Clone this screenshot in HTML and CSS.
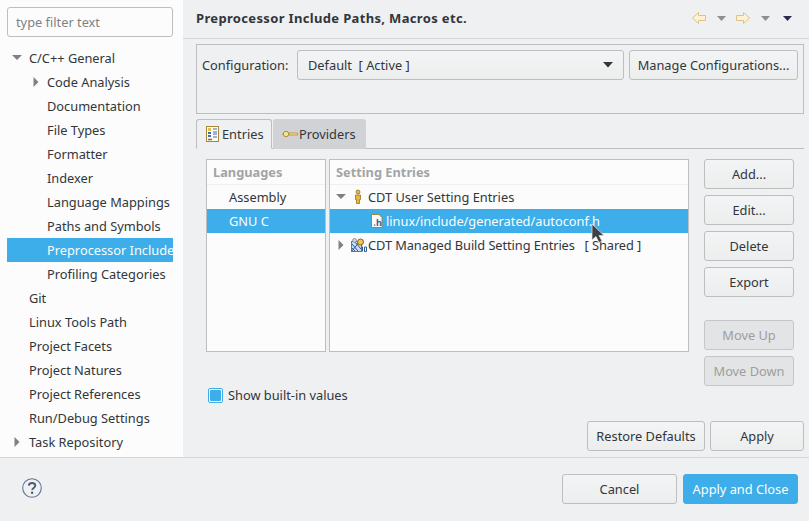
FILE: index.html
```html
<!DOCTYPE html>
<html lang="en">
<head>
<meta charset="utf-8">
<title>Preprocessor Include Paths, Macros etc.</title>
<link rel="stylesheet" href="styles.css">
</head>
<body>
<div class="app">
  <div class="main">
    <aside class="sidebar">
      <div class="filter">type filter text</div>
      <ul class="tree">
        <li class="node lvl0"><svg class="tw" viewBox="0 0 12 12"><path d="M1 3h10L6 8z"/></svg><span>C/C++ General</span></li>
        <li class="node lvl1"><svg class="tw" viewBox="0 0 12 12"><path d="M3.500 1v10L8.500 6z"/></svg><span>Code Analysis</span></li>
        <li class="node lvl1"><span>Documentation</span></li>
        <li class="node lvl1"><span>File Types</span></li>
        <li class="node lvl1"><span>Formatter</span></li>
        <li class="node lvl1"><span>Indexer</span></li>
        <li class="node lvl1"><span>Language Mappings</span></li>
        <li class="node lvl1"><span>Paths and Symbols</span></li>
        <li class="node lvl1 selected"><span class="clip">Preprocessor Include</span></li>
        <li class="node lvl1"><span>Profiling Categories</span></li>
        <li class="node lvl0"><span>Git</span></li>
        <li class="node lvl0"><span>Linux Tools Path</span></li>
        <li class="node lvl0"><span>Project Facets</span></li>
        <li class="node lvl0"><span>Project Natures</span></li>
        <li class="node lvl0"><span>Project References</span></li>
        <li class="node lvl0"><span>Run/Debug Settings</span></li>
        <li class="node lvl0"><svg class="tw" viewBox="0 0 12 12"><path d="M3.500 1v10L8.500 6z"/></svg><span>Task Repository</span></li>
      </ul>
    </aside>
    <section class="page">
      <header class="page-head">
        <h1>Preprocessor Include Paths, Macros etc.</h1>
        <div class="nav">
          <svg class="arrow" viewBox="1 1 14 12"><path d="M1.500 7 7.500 1.500V4.500H14.500V9.500H7.500V12.500z"/></svg>
          <svg class="mini" viewBox="0 0 11 7"><path d="M1 1h9L5.500 6z"/></svg>
          <svg class="arrow fwd" viewBox="1 1 14 12"><path d="M14.500 7 8.500 1.500V4.500H1.500V9.500H8.500V12.500z"/></svg>
          <svg class="mini" viewBox="0 0 11 7"><path d="M1 1h9L5.500 6z"/></svg>
          <svg class="mini menu" viewBox="0 0 11 7"><path d="M1 1h9L5.500 6z"/></svg>
        </div>
      </header>
      <div class="body">
        <div class="config">
          <span class="config-label">Configuration:</span>
          <div class="combo btn"><span>Default&nbsp; [ Active ]</span><svg class="combo-arrow" viewBox="0 0 10 6"><path d="M0 0h10L5 5.500z"/></svg></div>
          <button class="btn manage">Manage Configurations...</button>
        </div>
        <div class="tabs">
          <div class="tab active">
            <svg class="ic16" viewBox="0 0 14 16"><rect x=".5" y=".5" width="12" height="15" fill="#fdfcf4" stroke="#a8843c"/><rect x="2" y="2" width="3" height="3" fill="#e8c04a"/><path d="M2 6h3v2H2zM2 9h3v2H2z" fill="#3a6fb0"/><path d="M7 3h4M7 6h4M7 8h4M7 11h4" stroke="#3a6fb0"/><path d="M2 13.500h4" stroke="#c0562a" stroke-width="1.500"/></svg>
            <span>Entries</span>
          </div>
          <div class="tab">
            <svg class="ic-key" viewBox="0 0 16 8"><circle cx="4" cy="4" r="2.700" fill="#f4e3a0" stroke="#b18f2a"/><path d="M0 4h1M7 3h8.500v2H7z" fill="#f4e3a0" stroke="#b18f2a" stroke-width=".8"/></svg>
            <span>Providers</span>
          </div>
        </div>
        <div class="tab-body">
          <div class="tables">
            <div class="table languages">
              <div class="th">Languages</div>
              <div class="row indent-lang">Assembly</div>
              <div class="row indent-lang selected">GNU C</div>
            </div>
            <div class="table entries">
              <div class="th">Setting Entries</div>
              <div class="row">
                <svg class="tw tw-e" viewBox="0 0 12 12"><path d="M1 3h10L6 8z"/></svg>
                <svg class="ic-e" viewBox="0 0 10 16"><circle cx="5" cy="3" r="2" fill="#e8b93c" stroke="#8a6414" stroke-width=".7"/><path d="M2.500 6h5v4.500H6.500V14.500h-3V10.500h-1z" fill="#e8b93c" stroke="#8a6414" stroke-width=".7"/></svg>
                <span>CDT User Setting Entries</span>
              </div>
              <div class="row selected child">
                <svg class="ic-h" viewBox="0 0 12 14"><path d="M.5.5h7.500l3 3v10H.5z" fill="#fbfaf6" stroke="#a8843c"/><path d="M3 10.500h1.300v1.300H3z" fill="#2f5f9e"/><text x="5" y="11.800" class="h-letter">h</text></svg>
                <span>linux/include/generated/autoconf.h</span>
              </div>
              <div class="row">
                <svg class="tw tw-e collapsed" viewBox="0 0 12 12"><path d="M3.500 1v10L8.500 6z"/></svg>
                <svg class="ic-b" viewBox="0 0 16 14"><rect x=".5" y="3.500" width="10" height="10" fill="#cfdcee" stroke="#5a78a6"/><path d="M1 6l6 7M1 10l3 3M4 4l6 7M8 4l2 3M1 13l4-5 3-4" stroke="#2f5a96" fill="none"/><circle cx="3.500" cy="2.500" r="2" fill="#c9d3df" stroke="#70808f" stroke-width=".7"/><circle cx="9.500" cy="4" r="3" fill="#edc65a" stroke="#8a6414"/><path d="M11.500 8.500v5M13.500 9h2v4.500h-2z" fill="#fcfcfc" stroke="#2f5a96"/></svg>
                <span class="tight">CDT Managed Build Setting Entries&nbsp;&nbsp; [ Shared ]</span>
              </div>
            </div>
            <div class="actions">
              <button class="btn">Add...</button>
              <button class="btn">Edit...</button>
              <button class="btn">Delete</button>
              <button class="btn">Export</button>
              <button class="btn disabled spaced">Move Up</button>
              <button class="btn disabled">Move Down</button>
            </div>
          </div>
          <label class="check"><span class="box"><span class="box-fill"></span></span><span>Show built-in values</span></label>
        </div>
        <div class="page-btns">
          <button class="btn restore">Restore Defaults</button>
          <button class="btn apply">Apply</button>
        </div>
      </div>
    </section>
  </div>
  <footer class="foot">
    <svg class="help" viewBox="0 0 20 20"><circle cx="10" cy="10" r="9.300" fill="none" stroke="#5e7596" stroke-width="1.100"/><path d="M6.800 7.600C6.900 5.800 8.200 5 10 5c1.900 0 3.300 1 3.300 2.600 0 2.300-3.100 2.300-3.100 4.400" fill="none" stroke="#4d5a70" stroke-width="1.900"/><circle cx="10.100" cy="14.700" r="1.200" fill="#4d5a70"/></svg>
    <div class="foot-btns">
      <button class="btn cancel">Cancel</button>
      <button class="btn primary">Apply and Close</button>
    </div>
  </footer>
  <svg class="cursor" viewBox="0 0 14 22"><path d="M1 1v16l4-3.500 3 6 3-1.500-3-5.500h5z" fill="#3d4146" stroke="#e8e8e8" stroke-width=".7"/></svg>
</div>
</body>
</html>
```
FILE: styles.css
```css
* { box-sizing: border-box; }
html, body { margin: 0; padding: 0; }
body {
  width: 809px;
  height: 521px;
  overflow: hidden;
  font-family: "Noto Sans", sans-serif;
  font-size: 12.8px;
  color: #31363b;
  background: #eff0f1;
}
.app { position: relative; width: 809px; height: 521px; display: flex; flex-direction: column; }
.main { display: flex; height: 458px; border-bottom: 1px solid #d6d7d9; }
.sidebar { width: 183px; height: 457px; background: #fcfcfc; padding: 7px 10px 0 7px; overflow: hidden; }
.filter {
  height: 30px; line-height: 28px; padding-left: 8px;
  background: #fcfcfc; border: 1px solid #bcbebf; border-radius: 3px; color: #7f8285;
}
.tree { list-style: none; margin: 9px 0 0; padding: 0; }
.node { position: relative; height: 24px; line-height: 24px; white-space: nowrap; overflow: hidden; }
.lvl0 { padding-left: 22px; }
.lvl1 { padding-left: 40px; }
.node.selected { background: #3daee9; color: #fcfcfc; }
.tw { position: absolute; width: 12px; height: 12px; top: 6px; fill: #7e8184; }
.lvl0 .tw { left: 4px; }
.lvl1 .tw { left: 23px; }
.page { flex: 1; display: flex; flex-direction: column; min-width: 0; }
.page-head {
  height: 39px; border-bottom: 1px solid #d6d7d9; padding: 0 16px 3px 13px;
  display: flex; align-items: center; justify-content: space-between;
}
h1 { margin: 0; font-size: 13px; font-weight: 700; letter-spacing: .34px; color: #31363b; }
.nav { display: flex; align-items: center; }
.arrow { width: 14px; height: 12px; fill: #fdf3d4; stroke: #dfc284; stroke-width: 1; margin-right: 10px; margin-top: 1px; }
.arrow.fwd { margin-left: 9px; }
.mini { width: 11px; height: 7px; fill: #8d8f92; margin-top: 1px; }
.mini.menu { fill: #2d2a50; margin-left: 11px; }
.body { flex: 1; padding: 5px 5px 0 13px; display: flex; flex-direction: column; }
.config {
  height: 70px; border: 1px solid #bcbebf; padding: 5px 5px 0 5px;
  display: flex; align-items: flex-start; gap: 5px;
}
.config-label { line-height: 30px; width: 90px; flex: none; }
.btn {
  font: inherit; color: inherit; height: 30px; padding: 0;
  background: linear-gradient(#f3f4f5, #eceded);
  border: 1px solid #bcbebf; border-radius: 3px;
  display: flex; align-items: center; justify-content: center; white-space: nowrap;
}
.combo { width: 327px; padding: 0 10px; justify-content: space-between; }
.combo-arrow { width: 10px; height: 6px; fill: #31363b; }
.manage { width: 169px; }
.tabs { display: flex; height: 30px; margin-top: 5px; border-bottom: 1px solid #bcbebf; }
.tab {
  height: 30px; display: flex; align-items: center; padding-bottom: 1px;
  background: #d1d2d5; border-radius: 3px 3px 0 0; width: 93px; padding-left: 9px; margin-left: 1px;
}
.tab.active {
  width: 76px; padding-left: 9px; margin-left: 0;
  background: #eff0f1; border: 1px solid #bcbebf; border-bottom: 1px solid #eff0f1;
}
.ic16 { width: 14px; height: 16px; margin-right: 2px; }
.ic-key { width: 16px; height: 8px; margin-right: 1px; }
.tab-body { flex: none; height: 268px; padding: 10px 9px 0 10px; }
.tables { display: flex; height: 227px; }
.table { height: 193px; background: #fcfcfc; border: 1px solid #bcbebf; margin-right: 3px; }
.languages { width: 120px; }
.entries { width: 360px; margin-right: 15px; }
.th {
  height: 25px; line-height: 24px; padding-left: 6px; font-weight: 700; color: #a2a4a6;
  border-bottom: 1px solid #eeeff0;
}
.row { position: relative; height: 24px; line-height: 24px; white-space: nowrap; padding-left: 38px; }
.row.indent-lang { padding-left: 22px; }
.row.selected { background: #3daee9; color: #fcfcfc; }
.row.child { padding-left: 56px; }
.tight { letter-spacing: -.07px; }
.tw-e { left: 5px; top: 6px; }
.ic-e { position: absolute; left: 23px; top: 4px; width: 10px; height: 16px; }
.ic-h { position: absolute; left: 41px; top: 5px; width: 12px; height: 14px; }
.h-letter { font-size: 9px; font-weight: 700; fill: #2f5f9e; }
.ic-b { position: absolute; left: 21px; top: 5px; width: 16px; height: 14px; }
.actions { width: 90px; display: flex; flex-direction: column; gap: 6px; }
.actions .btn { width: 90px; flex: none; }
.btn.disabled { background: #e3e4e5; color: #9c9e9f; border-color: #c4c6c7; }
.btn.spaced { margin-top: 17px; }
.check { display: flex; align-items: center; height: 18px; margin-left: 2px; gap: 5px; }
.box {
  width: 15px; height: 15px; border: 1px solid #3daee9; border-radius: 2px; background: #fcfcfc;
  display: flex; align-items: center; justify-content: center;
}
.box-fill { width: 11px; height: 11px; background: #3daee9; border-radius: 1px; }
.page-btns { display: flex; justify-content: flex-end; gap: 5px; margin-top: 4px; }
.restore { width: 118px; }
.apply { width: 94px; }
.foot { flex: 1; display: flex; align-items: center; justify-content: space-between; padding: 0 11px 3px 22px; background: #eff0f1; }
.help { width: 20px; height: 20px; }
.foot-btns { display: flex; gap: 6px; margin-top: 2px; }
.cancel, .primary { width: 115px; }
.primary { background: #3daee9; border-color: #3daee9; color: #fcfcfc; }
.cursor { position: absolute; left: 591px; top: 223px; width: 14px; height: 22px; }
```
